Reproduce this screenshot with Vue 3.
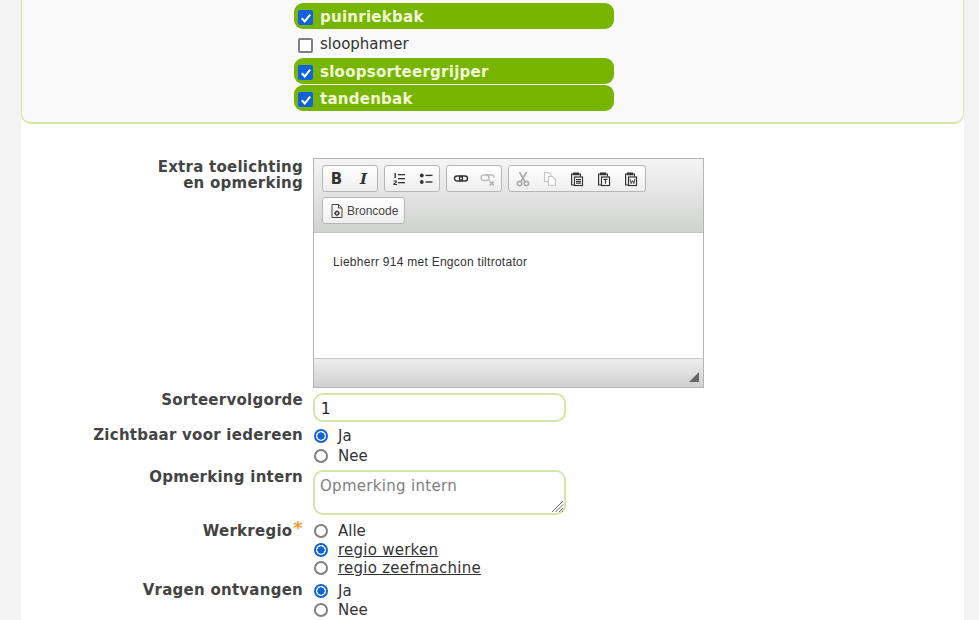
<script setup>
const tools = [
  { name: 'puinriekbak', on: true },
  { name: 'sloophamer', on: false },
  { name: 'sloopsorteergrijper', on: true },
  { name: 'tandenbak', on: true },
]
</script>

<template>
  <div class="page">
    <div class="content">
      <div class="panel">
        <label v-for="t in tools" :key="t.name" class="tool" :class="{ on: t.on }">
          <span class="check" :class="{ checked: t.on }">
            <svg v-if="t.on" width="14" height="14" viewBox="0 0 13 13"><path d="M2.6 6.8 5.3 9.6 10.4 3.4" fill="none" stroke="#fff" stroke-width="1.9"/></svg>
          </span>
          <span class="tool-name">{{ t.name }}</span>
        </label>
      </div>

      <div class="form">
        <div class="row row-editor">
          <div class="label">Extra toelichting<br>en opmerking</div>
          <div class="editor">
            <div class="toolbar">
              <div class="group">
                <span class="btn"><b class="bold">B</b></span>
                <span class="btn"><i class="ital">I</i></span>
              </div>
              <div class="group">
                <span class="btn">
                  <svg width="16" height="16" viewBox="0 0 16 16" fill="#333"><rect x="7" y="3" width="7" height="1.3"/><rect x="7" y="7" width="7" height="1.3"/><rect x="7" y="11" width="7" height="1.3"/><rect x="3.500" y="2" width="1.4" height="5"/><path d="M2.500 9.500h3.300v2l-2.200 1.400h2.400v1H2.400v-1.300l2.200-1.500v-.7H2.500z"/></svg>
                </span>
                <span class="btn">
                  <svg width="16" height="16" viewBox="0 0 16 16" fill="#333"><circle cx="3.800" cy="4.500" r="1.900"/><circle cx="3.800" cy="11" r="1.900"/><rect x="7.500" y="3.700" width="7" height="1.400"/><rect x="7.500" y="10.300" width="7" height="1.400"/></svg>
                </span>
              </div>
              <div class="group">
                <span class="btn">
                  <svg width="16" height="16" viewBox="0 0 16 16" fill="none" stroke="#333" stroke-width="1.4"><rect x="1.500" y="5" width="8" height="5" rx="2.500"/><rect x="6.500" y="5" width="8" height="5" rx="2.500"/></svg>
                </span>
                <span class="btn">
                  <svg width="16" height="16" viewBox="0 0 16 16" fill="none" stroke="#bbb" stroke-width="1.400"><rect x="1" y="4" width="8" height="5.500" rx="2.700"/><path d="M6 4h5.500q2.500 0 2.500 2.500M9 9.500h1"/><path d="M9.500 10.500l4.500 4M14 10.500l-4.500 4" stroke="#aaa"/></svg>
                </span>
              </div>
              <div class="group group-clip">
                <span class="btn">
                  <svg width="16" height="16" viewBox="0 0 16 16" fill="none" stroke="#aaa" stroke-width="1.600"><path d="M4.500 1 10 10.500M11.500 1 6 10.500"/><circle cx="4.600" cy="12.600" r="2.200"/><circle cx="11.400" cy="12.600" r="2.200"/></svg>
                </span>
                <span class="btn">
                  <svg width="16" height="16" viewBox="0 0 16 16" fill="#fff" stroke="#c4c4c4" stroke-width="1.100"><path d="M2.500 1.500h4l3 3v6h-7z"/><path d="M6.500 5.500h4l3 3v6h-7z"/></svg>
                </span>
                <span class="btn">
                  <svg width="16" height="16" viewBox="0 0 16 16" fill="none" stroke="#333" stroke-width="1.200"><path d="M4 3H2.600v11H5"/><path d="M4.500 3.600V2h5v1.600z" fill="#333"/><path d="M10 3h1.400v2.500"/><rect x="5.500" y="6" width="8" height="8.500" fill="#fff"/><path d="M7 8.500h5M7 10.300h5M7 12.100h5"/></svg>
                </span>
                <span class="btn">
                  <svg width="16" height="16" viewBox="0 0 16 16" fill="none" stroke="#333" stroke-width="1.200"><path d="M4 3H2.600v11H5"/><path d="M4.500 3.600V2h5v1.600z" fill="#333"/><path d="M10 3h1.400v2.500"/><rect x="5.500" y="6" width="8" height="8.500" fill="#fff"/><path d="M7.500 8.300h4M9.500 8.300v4.500"/></svg>
                </span>
                <span class="btn">
                  <svg width="16" height="16" viewBox="0 0 16 16" fill="none" stroke="#333" stroke-width="1.200"><path d="M4 3H2.600v11H5"/><path d="M4.500 3.600V2h5v1.600z" fill="#333"/><path d="M10 3h1.400v2.500"/><rect x="5.500" y="6" width="8" height="8.500" fill="#fff"/><path d="M7 8l1.200 4.600 1.300-3 1.300 3L12 8" stroke-width="1"/></svg>
                </span>
              </div>
              <div class="group source">
                <span class="btn wide">
                  <svg width="16" height="16" viewBox="0 0 16 16" fill="none" stroke="#444" stroke-width="1"><path d="M3 1.500h6.500l3.500 3.500v9.500H3z"/><path d="M9.500 1.500V5H13"/><circle cx="8" cy="10.300" r="1.700" stroke-width="1.500"/><path d="M8 7.300v1M8 12.300v1M5 10.300h1M10 10.300h1"/></svg>
                  <span>Broncode</span>
                </span>
              </div>
            </div>
            <div class="body">Liebherr 914 met Engcon tiltrotator</div>
            <div class="foot"><span class="grip"></span></div>
          </div>
        </div>

        <div class="row row-order">
          <div class="label">Sorteervolgorde</div>
          <div class="input">1</div>
        </div>

        <div class="row row-visible">
          <div class="label">Zichtbaar voor iedereen</div>
          <div class="radios">
            <div class="radio"><span class="dot sel"></span>Ja</div>
            <div class="radio"><span class="dot"></span>Nee</div>
          </div>
        </div>

        <div class="row row-note">
          <div class="label">Opmerking intern</div>
          <div class="textarea">
            Opmerking intern
            <svg class="resize" width="15" height="15" viewBox="0 0 15 15" stroke="#666" stroke-width="1"><path d="M14 3 3 14M14 6.500 6.500 14M14 10l-4 4M14 13l-1 1"/></svg>
          </div>
        </div>

        <div class="row row-region">
          <div class="label">Werkregio<span class="req">*</span></div>
          <div class="radios tight">
            <div class="radio"><span class="dot"></span>Alle</div>
            <div class="radio"><span class="dot sel"></span><u>regio werken</u></div>
            <div class="radio"><span class="dot"></span><u>regio zeefmachine</u></div>
          </div>
        </div>

        <div class="row row-questions">
          <div class="label">Vragen ontvangen</div>
          <div class="radios loose">
            <div class="radio"><span class="dot sel"></span>Ja</div>
            <div class="radio"><span class="dot"></span>Nee</div>
          </div>
        </div>
      </div>
    </div>
  </div>
</template>

<style>
html, body {
  margin: 0;
  background: #f3f3f3;
  overflow: hidden;
}
</style>

<style scoped>
.page {
  width: 979px;
  height: 620px;
  overflow: hidden;
  background: #f3f3f3;
  font-family: "DejaVu Sans", Verdana, sans-serif;
  font-size: 15px;
  color: #333;
}

.content {
  margin: 0 15px 0 21px;
  height: 620px;
  background: #fff;
}

.panel {
  box-sizing: border-box;
  height: 124px;
  padding: 3px 0 0 272px;
  background: #f8f9f8;
  border: 2px solid #d3e6a8;
  border-width: 0 1px 2px 1px;
  border-radius: 0 0 10px 10px;
}

.tool {
  display: flex;
  align-items: center;
  gap: 7px;
  box-sizing: border-box;
  width: 320px;
  height: 28px;
  padding: 0 0 0 4px;
  border-radius: 9px;
  font-size: 15px;
  color: #333;
}

.tool.on {
  background: #77b500;
  color: #f2fbd8;
  font-weight: 700;
  letter-spacing: 0.26px;
  height: 26px;
  margin-bottom: 1px;
}

.tool.on .tool-name {
  padding-top: 2px;
}

.check {
  box-sizing: border-box;
  display: flex;
  align-items: center;
  justify-content: center;
  width: 15px;
  height: 15px;
  margin-top: 3px;
  background: #fff;
  border: 2px solid #808080;
  border-radius: 2px;
}

.check.checked {
  background: #0f62d8;
  border: none;
}

.form {
  padding-top: 34px;
}

.row {
  display: flex;
  gap: 10px;
}

.label {
  width: 282px;
  flex: none;
  text-align: right;
  font-weight: 700;
  color: #444;
  font-size: 15px;
  line-height: 16px;
  letter-spacing: 0.25px;
}

.row-editor .label {
  padding-top: 1px;
}

.editor {
  box-sizing: border-box;
  width: 391px;
  height: 230px;
  border: 1px solid #b5b5b5;
  display: flex;
  flex-direction: column;
}

.toolbar {
  box-sizing: border-box;
  height: 74px;
  padding: 6px 8px 0;
  display: flex;
  flex-wrap: wrap;
  align-content: flex-start;
  gap: 5px 6px;
  background: linear-gradient(#f4f4f4, #d0d2d0);
  border-bottom: 1px solid #c4c4c4;
}

.group {
  display: flex;
  height: 27px;
  box-sizing: border-box;
  background: linear-gradient(#fff, #eeeeee);
  border: 1px solid #b6b6b6;
  border-radius: 3px;
}

.group-clip {
  width: 138px;
}

.source {
  flex-basis: 83px;
  flex-grow: 0;
}

.btn {
  display: flex;
  align-items: center;
  justify-content: center;
  flex: 1;
  min-width: 27px;
  color: #333;
}

.btn.wide {
  padding: 0 6px;
  gap: 2px;
  font-family: "Liberation Sans", Arial, sans-serif;
  font-size: 12px;
  color: #474747;
}

.bold {
  font-family: "DejaVu Sans", sans-serif;
  font-size: 15px;
  color: #333;
}

.ital {
  font-family: "DejaVu Serif", serif;
  font-weight: 700;
  font-size: 15px;
  color: #333;
}

.body {
  flex: 1;
  padding: 21px 19px 0;
  font-family: "Liberation Sans", Arial, sans-serif;
  font-size: 12px;
  letter-spacing: 0.27px;
  line-height: 16px;
  color: #333;
  background: #fff;
}

.foot {
  position: relative;
  height: 28px;
  border-top: 1px solid #c9c9c9;
  background: linear-gradient(#eeeeee, #cfcfcf);
}

.grip {
  position: absolute;
  right: 4px;
  bottom: 5px;
  width: 0;
  height: 0;
  border-left: 10px solid transparent;
  border-bottom: 10px solid #666;
}

.row-order {
  margin-top: 5px;
}

.row-order .label {
  margin-top: -1px;
}

.input {
  box-sizing: border-box;
  width: 253px;
  height: 29px;
  padding: 5px 6px 0;
  border: 2px solid #d3e6a8;
  border-radius: 10px;
  background: #fff;
  color: #222;
  font-size: 15px;
  line-height: 18px;
}

.row-visible {
  margin-top: 4px;
}

.row-visible .label {
  padding-top: 1px;
}

.radios {
  display: flex;
  flex-direction: column;
  font-size: 15px;
}

.radio {
  display: flex;
  align-items: center;
  gap: 10px;
  height: 20px;
  color: #333;
}

.radio u {
  letter-spacing: 0.25px;
}

.tight .radio {
  height: 18.5px;
}

.loose .radio {
  height: 19px;
}

.dot {
  box-sizing: border-box;
  width: 14px;
  height: 14px;
  margin-left: 1px;
  border: 2px solid #808080;
  border-radius: 50%;
  background: #fff;
}

.dot.sel {
  border: 2px solid #0f62d8;
  background: radial-gradient(circle, #0f62d8 0 3.400px, #fff 3.900px);
}

.row-note {
  margin-top: 4px;
}

.row-note .label {
  margin-top: -1px;
}

.textarea {
  position: relative;
  box-sizing: border-box;
  width: 253px;
  height: 45px;
  padding: 5px 5px;
  border: 2px solid #d3e6a8;
  border-radius: 10px;
  color: #808080;
  font-size: 15px;
  line-height: 18px;
  letter-spacing: 0.3px;
}

.resize {
  position: absolute;
  right: 0;
  bottom: 0;
}

.row-region {
  margin-top: 7px;
}

.row-region .label {
  padding-top: 1px;
}

.req {
  color: #f39a2e;
  vertical-align: 2px;
  line-height: 0;
  font-size: 18px;
  margin-left: 1px;
}

.row-questions {
  margin-top: 4px;
}

.row-questions .label {
  padding-top: 0;
}
</style>
